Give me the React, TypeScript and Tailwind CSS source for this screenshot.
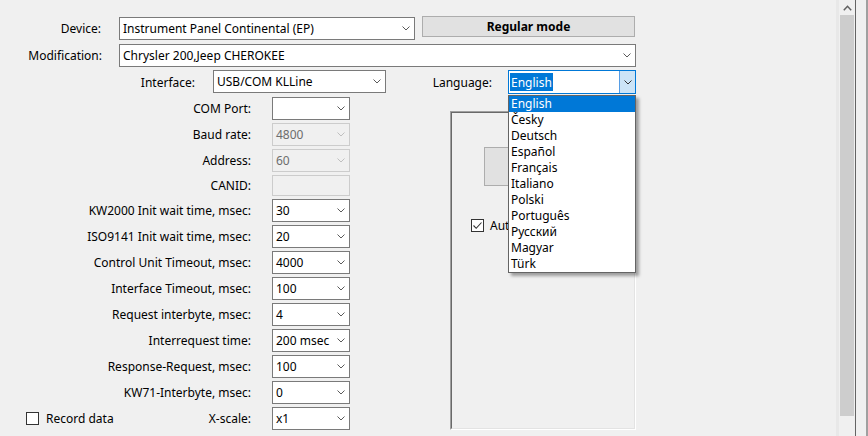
import React from "react";

function Chevron({ color = "#5a5a5a" }: { color?: string }) {
  return (
    <svg width="8" height="5" viewBox="0 0 8 5" className="shrink-0">
      <path d="M0.5 0.5 L4 4 L7.5 0.5" fill="none" stroke={color} strokeWidth="1" />
    </svg>
  );
}

function Combo({
  value,
  w,
  disabled = false,
}: {
  value: string;
  w: string;
  disabled?: boolean;
}) {
  return (
    <div
      className={`flex items-center h-[23px] border ${w} ${
        disabled ? "border-[#cccccc] bg-[#f0f0f0] text-[#6d6d6d]" : "border-[#7a7a7a] bg-white text-black"
      }`}
    >
      <span className="flex-1 pl-[3px] leading-[17px] whitespace-nowrap">{value}</span>
      <span className="mr-[4px] flex items-center">
        <Chevron color={disabled ? "#bfbfbf" : "#5a5a5a"} />
      </span>
    </div>
  );
}

function Row({ label, children, h = "h-[23px]" }: { label: string; children: React.ReactNode; h?: string }) {
  return (
    <div className={`flex items-center ${h}`}>
      <div className="w-[251px] text-right whitespace-nowrap">{label}</div>
      <div className="ml-[21px]">{children}</div>
    </div>
  );
}

const languages = [
  "English",
  "Česky",
  "Deutsch",
  "Español",
  "Français",
  "Italiano",
  "Polski",
  "Português",
  "Русский",
  "Magyar",
  "Türk",
];

export default function App() {
  return (
    <div className="relative w-[868px] h-[436px] overflow-hidden bg-[#f0f0f0] text-[12px] leading-[17px] text-black font-['Noto_Sans',sans-serif] flex">
      {/* Main form area */}
      <div className="w-[836px] flex flex-col">
        {/* Row 1 */}
        <div className="flex items-center mt-[17px] h-[23px]">
          <div className="w-[101px] text-right">Device:</div>
          <div className="ml-[18px]">
            <Combo value="Instrument Panel Continental (EP)" w="w-[296px]" />
          </div>
          <div className="ml-[7px] self-start -mt-[1px] w-[213px] h-[21px] bg-[#e1e1e1] border border-[#adadad] flex items-center justify-center font-bold">
            Regular mode
          </div>
        </div>
        {/* Row 2 */}
        <div className="flex items-center mt-[4px] h-[23px]">
          <div className="w-[102px] text-right">Modification:</div>
          <div className="ml-[17px]">
            <Combo value="Chrysler 200,Jeep CHEROKEE" w="w-[517px]" />
          </div>
        </div>
        {/* Row 3 */}
        <div className="flex items-center mt-[3px] h-[24px]">
          <div className="w-[195px] text-right">Interface:</div>
          <div className="ml-[18px] self-start">
            <Combo value="USB/COM KLLine" w="w-[173px]" />
          </div>
          <div className="w-[106px] text-right">Language:</div>
          <div className="ml-[16px] w-[128px] h-[24px] border border-[#0078d7] bg-white flex items-center">
            <div className="flex-1 pl-[1px] flex items-center">
              <span className="bg-[#0078d7] text-white h-[18px] px-[1px] flex items-center">English</span>
            </div>
            <div className="w-[16px] h-full bg-[#cce4f7] border-l border-[#569de5] flex items-center justify-center">
              <Chevron color="#333333" />
            </div>
          </div>
        </div>
        {/* Body */}
        <div className="flex mt-[3px]">
          <div className="flex flex-col w-[350px]">
            <div className="flex flex-col gap-[3px]">
              <Row label="COM Port:">
                <Combo value="" w="w-[78px]" />
              </Row>
              <Row label="Baud rate:">
                <Combo value="4800" w="w-[78px]" disabled />
              </Row>
              <Row label="Address:">
                <Combo value="60" w="w-[78px]" disabled />
              </Row>
              <Row label="CANID:" h="h-[21px]">
                <div className="w-[78px] h-[21px] border border-[#cccccc] bg-[#f0f0f0]" />
              </Row>
              <Row label="KW2000 Init wait time, msec:">
                <Combo value="30" w="w-[78px]" />
              </Row>
              <Row label="ISO9141 Init wait time, msec:">
                <Combo value="20" w="w-[78px]" />
              </Row>
              <Row label="Control Unit Timeout, msec:">
                <Combo value="4000" w="w-[78px]" />
              </Row>
              <Row label="Interface Timeout, msec:">
                <Combo value="100" w="w-[78px]" />
              </Row>
              <Row label="Request interbyte, msec:">
                <Combo value="4" w="w-[78px]" />
              </Row>
              <Row label="Interrequest time:">
                <Combo value="200 msec" w="w-[78px]" />
              </Row>
              <Row label="Response-Request, msec:">
                <Combo value="100" w="w-[78px]" />
              </Row>
              <Row label="KW71-Interbyte, msec:">
                <Combo value="0" w="w-[78px]" />
              </Row>
              <div className="flex items-center h-[23px]">
                <div className="w-[251px] flex items-center">
                  <div className="ml-[26px] w-[13px] h-[13px] border border-[#333333] bg-white" />
                  <span className="ml-[7px]">Record data</span>
                  <span className="flex-1 text-right">X-scale:</span>
                </div>
                <div className="ml-[21px]">
                  <Combo value="x1" w="w-[78px]" />
                </div>
              </div>
            </div>
          </div>
          {/* Panel */}
          <div className="ml-[100px] mt-[14px] w-[186px] h-[319px] border border-t-[#a0a0a0] border-l-[#a0a0a0] border-r-white border-b-white">
            <div className="w-full h-full border border-t-[#696969] border-l-[#696969] border-r-[#e3e3e3] border-b-[#e3e3e3] flex flex-col">
              <div className="ml-[32px] mt-[34px] w-[110px] h-[39px] bg-[#e1e1e1] border border-[#adadad]" />
              <div className="ml-[19px] mt-[31px] flex items-center">
                <div className="w-[13px] h-[13px] border border-[#333333] bg-white flex items-center justify-center">
                  <svg width="11" height="11" viewBox="0 0 11 11">
                    <path d="M1.5 5.5 L4.2 8.3 L9.5 2.5" fill="none" stroke="#333333" strokeWidth="1.1" />
                  </svg>
                </div>
                <span className="ml-[6px]">Autoscale</span>
              </div>
            </div>
          </div>
        </div>
      </div>

      {/* Scrollbar */}
      <div className="w-[3px] h-full bg-[#e8e8e8]" />
      <div className="w-[16px] h-full flex flex-col bg-[#f0f0f0]">
        <div className="h-[15px] flex items-center justify-center">
          <svg width="9" height="6" viewBox="0 0 9 6">
            <path d="M0.8 5.2 L4.5 1.3 L8.2 5.2" fill="none" stroke="#606060" strokeWidth="1.5" />
          </svg>
        </div>
        <div className="mx-[1px] h-[401px] bg-[#cdcdcd]" />
      </div>
      <div className="w-[1px] h-full bg-[#646464]" />
      <div className="w-[10px] h-full bg-[#f0f0f0]" />
      <div className="w-[2px] h-full bg-[#a0a0a0]" />

      {/* Dropdown list overlay */}
      <div className="absolute left-[508px] top-[95px] w-[128px] border border-[#646464] bg-white leading-[16px] shadow-[3px_3px_3px_rgba(0,0,0,0.35)]">
        {languages.map((l, i) => (
          <div
            key={l}
            className={`h-[16px] pl-[2px] flex items-center whitespace-nowrap ${
              i === 0 ? "bg-[#0078d7] text-white" : "text-black"
            }`}
          >
            {l}
          </div>
        ))}
      </div>
    </div>
  );
}
